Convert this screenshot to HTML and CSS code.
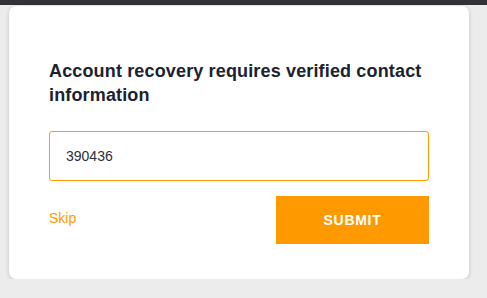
FILE: index.html
```html
<!DOCTYPE html>
<html>
<head>
<meta charset="utf-8">
<link rel="stylesheet" href="styles.css">
</head>
<body>
<div class="topbar"></div>
<div class="page">
  <div class="card">
    <h1 class="title">Account recovery requires verified contact information</h1>
    <div class="field">390436</div>
    <div class="actions">
      <a class="skip">Skip</a>
      <button class="submit">SUBMIT</button>
    </div>
  </div>
</div>
</body>
</html>
```
FILE: styles.css
```css
html, body {
  margin: 0;
  padding: 0;
  background: #ececec;
  font-family: "Liberation Sans", Arial, sans-serif;
}
.topbar {
  height: 5px;
  background: #323337;
}
.page {
  padding: 1px 18px 0 9px;
}
.card {
  background: #fff;
  border-radius: 7px;
  box-shadow: 0 1px 4px rgba(0, 0, 0, 0.18);
  padding: 53px 40px 35px 40px;
}
.title {
  margin: 0;
  font-size: 18px;
  line-height: 24px;
  font-weight: bold;
  letter-spacing: 0.15px;
  color: #1b2230;
}
.field {
  margin-top: 24px;
  height: 48px;
  border: 1px solid #ff9900;
  border-radius: 3px;
  box-sizing: content-box;
  display: flex;
  align-items: center;
  padding: 0 16px;
  font-size: 14px;
  color: #2a2f3a;
}
.actions {
  margin-top: 15px;
  display: flex;
  justify-content: space-between;
  align-items: center;
}
.skip {
  font-size: 14px;
  color: #ff9900;
  margin-bottom: 4px;
}
.submit {
  width: 153px;
  height: 48px;
  border: none;
  background: #ff9900;
  color: #fff;
  font-family: "Liberation Sans", Arial, sans-serif;
  font-size: 14px;
  font-weight: bold;
  letter-spacing: 0.7px;
  padding: 0;
}
```
